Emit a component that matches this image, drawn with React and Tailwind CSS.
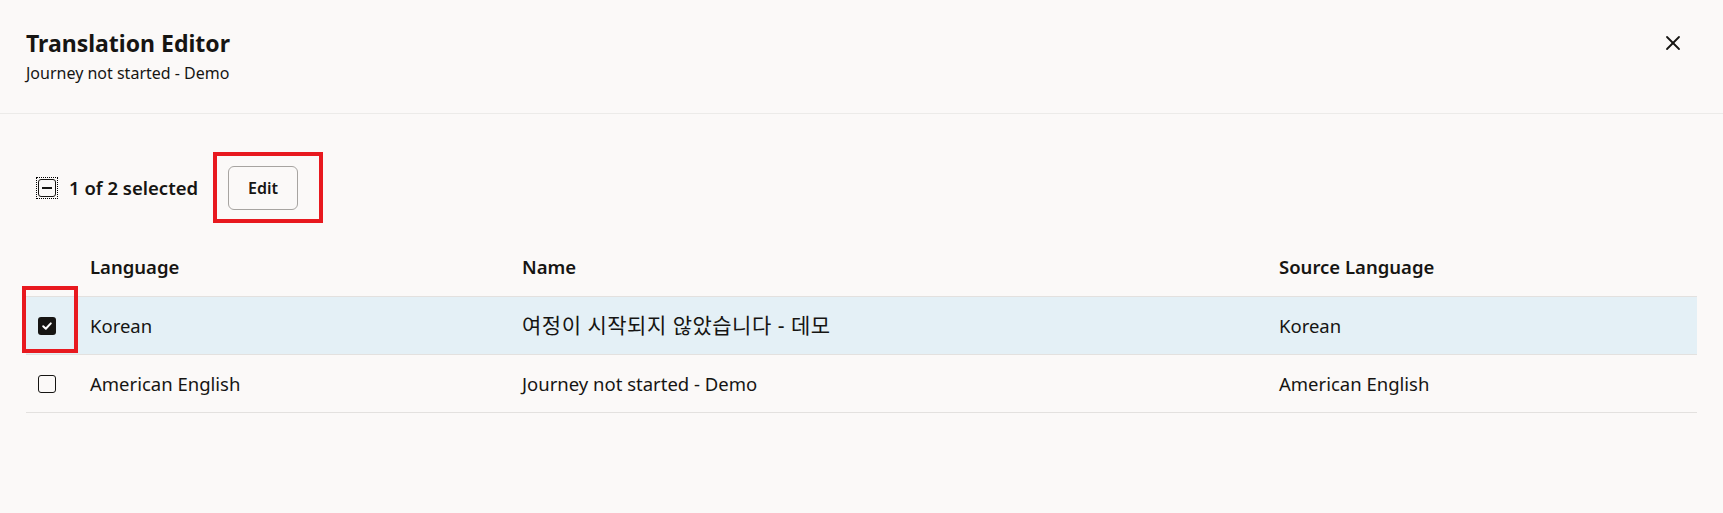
import { X } from 'lucide-react';

const rows = [
  { id: 'ko', language: 'Korean', name: '여정이 시작되지 않았습니다 - 데모', source: 'Korean', checked: true },
  { id: 'en', language: 'American English', name: 'Journey not started - Demo', source: 'American English', checked: false },
];

function CheckBox({ checked }) {
  if (checked) {
    return (
      <span className="flex h-[18px] w-[18px] items-center justify-center rounded-[3px] bg-[#161513]">
        <svg width="12" height="12" viewBox="0 0 12 12" fill="none">
          <path d="M2.2 6.3 4.8 8.8 9.8 3.4" stroke="white" strokeWidth="2" strokeLinecap="round" strokeLinejoin="round" />
        </svg>
      </span>
    );
  }
  return <span className="block h-[18px] w-[18px] rounded-[3px] border border-[#161513] bg-[#fbf9f8]" />;
}

export default function App() {
  return (
    <div className="relative min-h-[513px] bg-[#fbf9f8] text-[#161513] font-['Noto_Sans','Noto_Sans_CJK_KR',sans-serif]">
      <div className="flex items-start justify-between border-b border-[#ecebe9] pl-[26px] pr-[34px] pt-[28px] pb-[30px]">
        <div>
          <h1 className="text-[23px] leading-[30px] font-bold">Translation Editor</h1>
          <p className="mt-[5px] text-[16px] leading-[20px]">Journey not started - Demo</p>
        </div>
        <button className="-mt-[1px] flex h-[32px] w-[32px] items-center justify-center">
          <X size={24} strokeWidth={1.8} color="#161513" />
        </button>
      </div>

      <div className="px-[26px]">
        <div className="flex items-center pt-[52px]">
          <span className="ml-[10px] block border border-dotted border-black p-px">
            <span className="flex h-[18px] w-[18px] items-center justify-center rounded-[3px] border border-[#161513]">
              <span className="block h-[2px] w-[10px] bg-[#161513]" />
            </span>
          </span>
          <span className="ml-[11px] text-[18.5px] font-semibold">1 of 2 selected</span>
          <button className="ml-[30px] h-[44px] w-[70px] rounded-[6px] border border-[#a7a4a1] text-[16px] font-semibold">
            Edit
          </button>
        </div>

        <div className="mt-[27px]">
          <div className="grid h-[60px] grid-cols-[52px_432px_757px_1fr] items-center border-b border-[#e3e1df] text-[18.5px] font-semibold">
            <div />
            <div className="pl-[12px]">Language</div>
            <div className="pl-[12px]">Name</div>
            <div className="pl-[12px]">Source Language</div>
          </div>
          {rows.map((row) => (
            <div
              key={row.id}
              className={`grid h-[58px] grid-cols-[52px_432px_757px_1fr] items-center border-b border-[#e3e1df] text-[18.5px] ${row.checked ? 'bg-[#e4f0f6]' : ''}`}
            >
              <div className="pl-[12px]">
                <CheckBox checked={row.checked} />
              </div>
              <div className="pl-[12px]">{row.language}</div>
              <div className={`pl-[12px] ${row.checked ? 'text-[21px] tracking-[0.5px]' : ''}`}>{row.name}</div>
              <div className="pl-[12px]">{row.source}</div>
            </div>
          ))}
        </div>
      </div>

      <div className="pointer-events-none absolute left-[213px] top-[152px] h-[71px] w-[110px] border-[4px] border-[#e8191f]" />
      <div className="pointer-events-none absolute left-[22px] top-[286px] h-[67px] w-[56px] border-[4px] border-[#e8191f]" />
    </div>
  );
}
